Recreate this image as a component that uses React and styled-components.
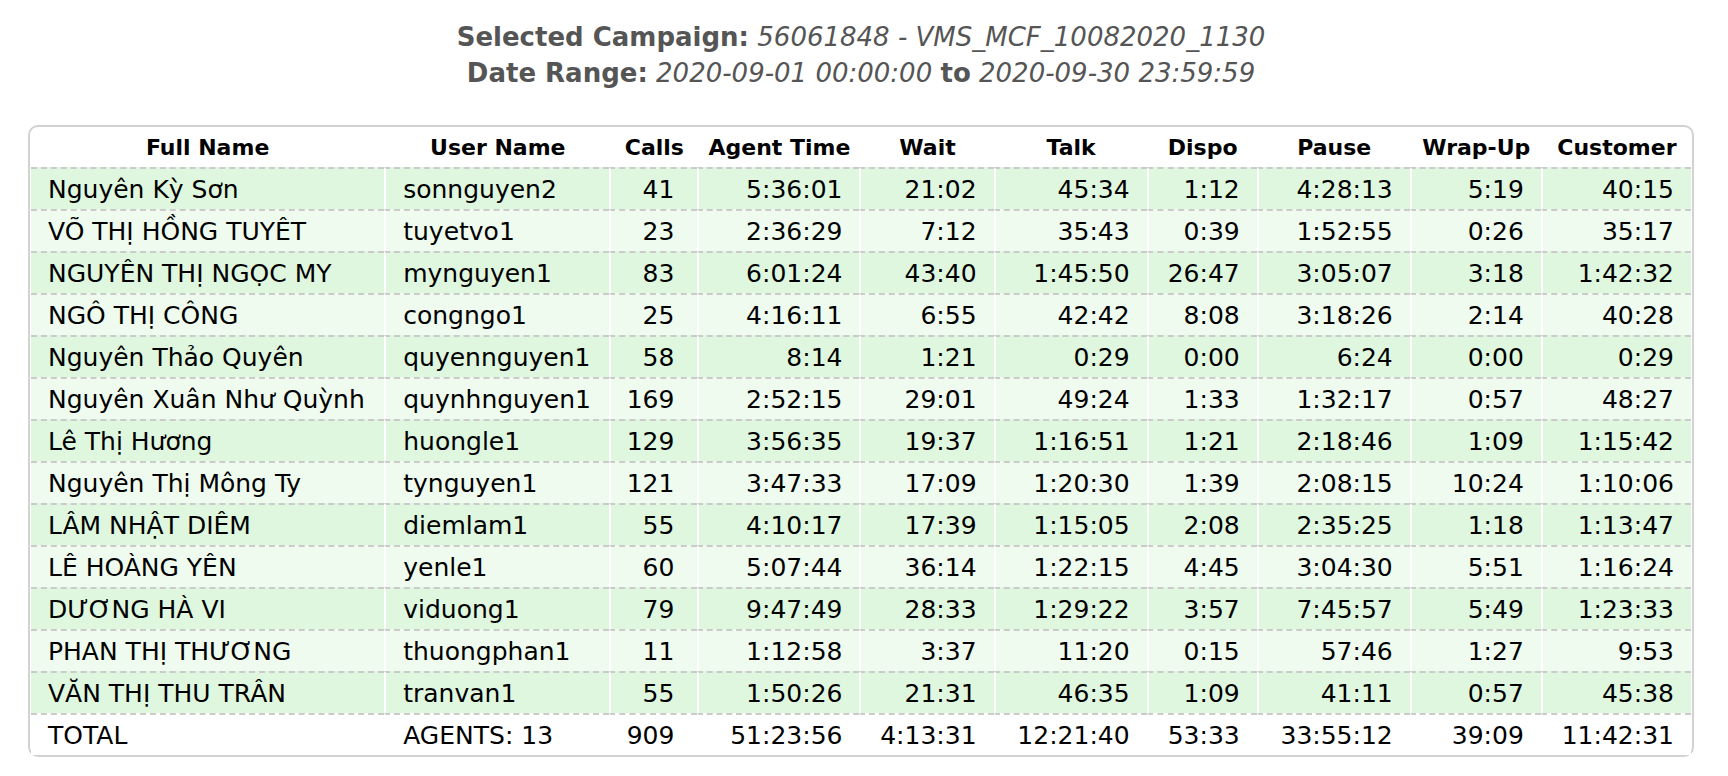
import React from "react";
import styled, { createGlobalStyle } from "styled-components";

const Global = createGlobalStyle`
  html, body { margin: 0; padding: 0; background: #fff; }
  body { font-family: "DejaVu Sans", Verdana, sans-serif; }
`;

const Page = styled.div`
  width: 1728px;
  padding: 19px 34px 0 28px;
  box-sizing: border-box;
`;

const Heading = styled.div`
  text-align: center;
  color: #555;
  font-size: 26px;
  line-height: 36px;
  margin-bottom: 34px;
`;

const Label = styled.b`
  font-weight: bold;
`;

const Value = styled.i`
  font-style: italic;
`;

const Box = styled.div`
  border: 2px solid #d2d2d2;
  border-radius: 10px;
  padding: 0 1px;
`;

const Table = styled.table`
  width: 100%;
  border-collapse: separate;
  border-spacing: 0;
  table-layout: fixed;
  font-family: "DejaVu Sans", "Lucida Grande", sans-serif;
  font-size: 25px;
  color: #000;
`;

const Th = styled.th`
  height: 40px;
  padding: 0;
  font-size: 22px;
  font-weight: bold;
  text-align: center;
  white-space: nowrap;
  border-left: ${(p) => (p.$first ? "0" : "2px solid #fff")};
`;

const Tr = styled.tr`
  background: ${(p) => (p.$total ? "#fff" : p.$alt ? "#effbef" : "#dff7df")};
`;

const Td = styled.td`
  height: 40px;
  padding: 0 ${(p) => (p.$left ? "0" : p.$pr || "17px")} 0 ${(p) => (p.$left ? "17px" : "0")};
  text-align: ${(p) => (p.$left ? "left" : "right")};
  white-space: nowrap;
  border-top: 2px dashed #cbcbcb;
  border-left: ${(p) => (p.$first ? "0" : "2px solid #fff")};
`;

const cols = [353, 225, 88, 162, 134, 153, 110, 153, 131, 150];
const heads = ["Full Name", "User Name", "Calls", "Agent Time", "Wait", "Talk", "Dispo", "Pause", "Wrap-Up", "Customer"];

const rows = [
  ["Nguyên Kỳ Sơn", "sonnguyen2", "41", "5:36:01", "21:02", "45:34", "1:12", "4:28:13", "5:19", "40:15"],
  ["VÕ THỊ HỒNG TUYÊT", "tuyetvo1", "23", "2:36:29", "7:12", "35:43", "0:39", "1:52:55", "0:26", "35:17"],
  ["NGUYÊN THỊ NGỌC MY", "mynguyen1", "83", "6:01:24", "43:40", "1:45:50", "26:47", "3:05:07", "3:18", "1:42:32"],
  ["NGÔ THỊ CÔNG", "congngo1", "25", "4:16:11", "6:55", "42:42", "8:08", "3:18:26", "2:14", "40:28"],
  ["Nguyên Thảo Quyên", "quyennguyen1", "58", "8:14", "1:21", "0:29", "0:00", "6:24", "0:00", "0:29"],
  ["Nguyên Xuân Như Quỳnh", "quynhnguyen1", "169", "2:52:15", "29:01", "49:24", "1:33", "1:32:17", "0:57", "48:27"],
  ["Lê Thị Hương", "huongle1", "129", "3:56:35", "19:37", "1:16:51", "1:21", "2:18:46", "1:09", "1:15:42"],
  ["Nguyên Thị Mông Ty", "tynguyen1", "121", "3:47:33", "17:09", "1:20:30", "1:39", "2:08:15", "10:24", "1:10:06"],
  ["LÂM NHẬT DIÊM", "diemlam1", "55", "4:10:17", "17:39", "1:15:05", "2:08", "2:35:25", "1:18", "1:13:47"],
  ["LÊ HOÀNG YÊN", "yenle1", "60", "5:07:44", "36:14", "1:22:15", "4:45", "3:04:30", "5:51", "1:16:24"],
  ["DƯƠNG HÀ VI", "viduong1", "79", "9:47:49", "28:33", "1:29:22", "3:57", "7:45:57", "5:49", "1:23:33"],
  ["PHAN THỊ THƯƠNG", "thuongphan1", "11", "1:12:58", "3:37", "11:20", "0:15", "57:46", "1:27", "9:53"],
  ["VĂN THỊ THU TRÂN", "tranvan1", "55", "1:50:26", "21:31", "46:35", "1:09", "41:11", "0:57", "45:38"],
];

const total = ["TOTAL", "AGENTS: 13", "909", "51:23:56", "4:13:31", "12:21:40", "53:33", "33:55:12", "39:09", "11:42:31"];

const padRight = { 2: "23px" };

function Row({ data, alt, isTotal }) {
  return (
    <Tr $alt={alt} $total={isTotal}>
      {data.map((v, i) => (
        <Td key={i} $first={i === 0} $left={i < 2} $pr={padRight[i]}>
          {v}
        </Td>
      ))}
    </Tr>
  );
}

export default function App() {
  return (
    <>
      <Global />
      <Page>
        <Heading>
          <div>
            <Label>Selected Campaign:</Label> <Value>56061848 - VMS_MCF_10082020_1130</Value>
          </div>
          <div>
            <Label>Date Range:</Label> <Value>2020-09-01 00:00:00</Value> <Label>to</Label>{" "}
            <Value>2020-09-30 23:59:59</Value>
          </div>
        </Heading>
        <Box>
          <Table>
            <colgroup>
              {cols.map((w, i) => (
                <col key={i} style={{ width: w }} />
              ))}
            </colgroup>
            <thead>
              <tr>
                {heads.map((h, i) => (
                  <Th key={h} $first={i === 0}>
                    {h}
                  </Th>
                ))}
              </tr>
            </thead>
            <tbody>
              {rows.map((r, i) => (
                <Row key={i} data={r} alt={i % 2 === 1} />
              ))}
              <Row data={total} isTotal />
            </tbody>
          </Table>
        </Box>
      </Page>
    </>
  );
}
